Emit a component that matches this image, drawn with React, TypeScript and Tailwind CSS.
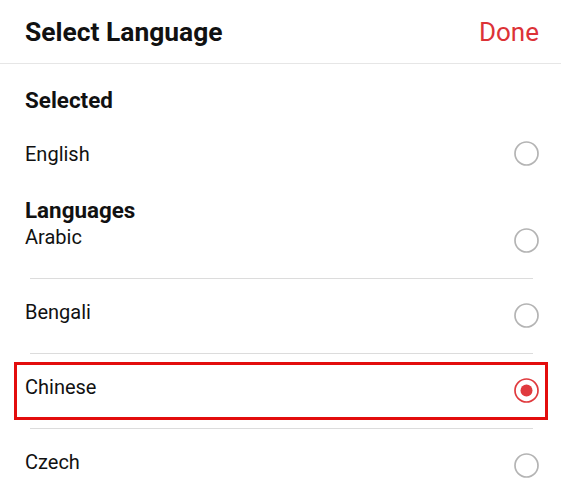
import React from "react";

function Radio({ checked }: { checked?: boolean }) {
  return (
    <svg width="25" height="25" viewBox="0 0 25 25" className="shrink-0">
      <circle
        cx="12.5"
        cy="12.5"
        r="11.5"
        fill="none"
        stroke={checked ? "#e03a3e" : "#b4b4b4"}
        strokeWidth="1.7"
      />
      {checked && <circle cx="12.5" cy="12.5" r="6" fill="#e03a3e" />}
    </svg>
  );
}

const languages = ["Arabic", "Bengali", "Chinese", "Czech"];

function Row({ name, first, selected }: { name: string; first?: boolean; selected?: boolean }) {
  return (
    <div className={`pl-[14px] pr-[13px] ${first ? "pt-0" : "pt-2"} pb-2`}>
      <div
        className={`flex items-start justify-between border-[3px] pl-2 pr-[6px] ${first ? "pt-0" : "pt-[10px]"} pb-[14px] ${
          selected ? "border-[#e30d0d]" : "border-transparent"
        }`}
      >
        <span className="text-[20px] leading-6 text-[#111]">{name}</span>
        <div className="mt-[3px]">
          <Radio checked={selected} />
        </div>
      </div>
    </div>
  );
}

export default function App() {
  return (
    <div className="w-[561px] h-[494px] overflow-hidden bg-white" style={{ fontFamily: "Roboto, 'Noto Sans', sans-serif" }}>
      <header className="h-16 flex items-center justify-between border-b border-[#e6e6e6] pl-[25px] pr-[22px]">
        <h1 className="text-[26.4px] leading-8 font-bold text-[#111]">Select Language</h1>
        <button className="text-[26px] leading-8 text-[#dc3237]">Done</button>
      </header>
      <div className="pt-6 pl-[25px] pr-[22px]">
        <h2 className="text-[22.4px] leading-6 font-bold text-[#111]">Selected</h2>
        <div className="mt-[29px] flex items-center justify-between">
          <span className="text-[20px] leading-6 text-[#111]">English</span>
          <Radio />
        </div>
        <h2 className="mt-8 text-[22.4px] leading-6 font-bold text-[#111]">Languages</h2>
      </div>
      <div>
        {languages.map((l, i) => (
          <React.Fragment key={l}>
            {i > 0 && <div className="ml-[30px] mr-[28px] h-px bg-[#dcdcdc]" />}
            <Row name={l} first={i === 0} selected={l === "Chinese"} />
          </React.Fragment>
        ))}
      </div>
    </div>
  );
}
